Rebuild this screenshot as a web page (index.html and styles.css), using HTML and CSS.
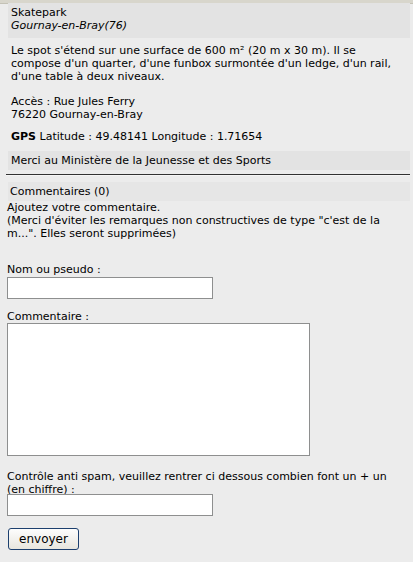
FILE: index.html
```html
<!DOCTYPE html>
<html lang="fr">
<head>
<meta charset="utf-8">
<title>Skatepark Gournay-en-Bray</title>
<link rel="stylesheet" href="styles.css">
</head>
<body>
<div class="page">
  <div class="head">
    <div class="title">Skatepark</div>
    <div class="city">Gournay-en-Bray(76)</div>
  </div>
  <div class="desc">
    <p class="text">Le spot s'étend sur une surface de 600 m² (20 m x 30 m). Il se compose d'un quarter, d'une funbox surmontée d'un ledge, d'un rail, d'une table à deux niveaux.</p>
    <p class="addr">Accès : Rue Jules Ferry<br>76220 Gournay-en-Bray</p>
    <p class="gps"><b>GPS</b> Latitude : 49.48141 Longitude : 1.71654</p>
  </div>
  <div class="thanks">Merci au Ministère de la Jeunesse et des Sports</div>
  <div class="rule"></div>
  <div class="comhead">Commentaires (0)</div>
  <div class="form">
    <p class="intro">Ajoutez votre commentaire.<br>(Merci d'éviter les remarques non constructives de type "c'est de la m...". Elles seront supprimées)</p>
    <label class="lbl lbl-name">Nom ou pseudo :</label>
    <input class="field" type="text">
    <label class="lbl lbl-com">Commentaire :</label>
    <textarea class="area"></textarea>
    <label class="lbl lbl-spam">Contrôle anti spam, veuillez rentrer ci dessous combien font un + un (en chiffre) :</label>
    <input class="field" type="text">
    <button class="send" type="button">envoyer</button>
  </div>
</div>
</body>
</html>
```
FILE: styles.css
```css
html, body {
  margin: 0;
  padding: 0;
}
body {
  background: #ececec;
  font-family: "DejaVu Sans", Verdana, sans-serif;
  font-size: 11px;
  line-height: 13px;
  color: #000;
  border-top: 3px solid #d8d6cc;
  box-shadow: inset 0 1px 0 #c4c2b6;
}
.page {
  padding: 0 3px 0 0;
}
.head {
  margin: 0 0 0 8px;
  padding: 3px 3px 6px 3px;
  background: #e3e3e3;
}
.city {
  font-style: italic;
}
.desc {
  margin-left: 8px;
  padding: 6px 3px 0 3px;
}
.desc p {
  margin: 0 0 12px 0;
}
.desc .addr {
  margin-bottom: 9px;
}
.desc .gps {
  margin-bottom: 8px;
}
.thanks {
  margin-left: 8px;
  padding: 3px 3px 3px 3px;
  background: #e3e3e3;
}
.rule {
  margin: 4px 0 6px 6px;
  border-top: 1px solid #333;
  border-bottom: 1px solid #f6f6f6;
}
.comhead {
  margin-left: 8px;
  padding: 3px 2px;
  background: #e6e6e6;
}
.form {
  padding: 0 0 0 7px;
  display: flex;
  flex-direction: column;
  align-items: flex-start;
}
.intro {
  margin: 0 0 23px 0;
}
.lbl {
  display: block;
}
.lbl-name {
  margin-bottom: 1px;
}
.field {
  width: 206px;
  height: 22px;
  box-sizing: border-box;
  margin: 0;
  border: 1px solid #8e8f8f;
  background: #fff;
}
.lbl-com {
  margin-top: 11px;
  margin-bottom: 0;
}
.area {
  width: 303px;
  height: 133px;
  box-sizing: border-box;
  margin: 0;
  border: 1px solid #8e8f8f;
  background: #fff;
  resize: none;
}
.lbl-spam {
  margin-top: 14px;
  margin-right: 10px;
  margin-bottom: -2px;
}
.send {
  margin: 12px 0 0 1px;
  width: 71px;
  height: 22px;
  font-family: "DejaVu Sans", Verdana, sans-serif;
  font-size: 12px;
  background: linear-gradient(#fdfdfd, #e8e6de);
  border: 1px solid #1c3f6e;
  border-radius: 3px;
  color: #000;
  padding: 0;
}
```
